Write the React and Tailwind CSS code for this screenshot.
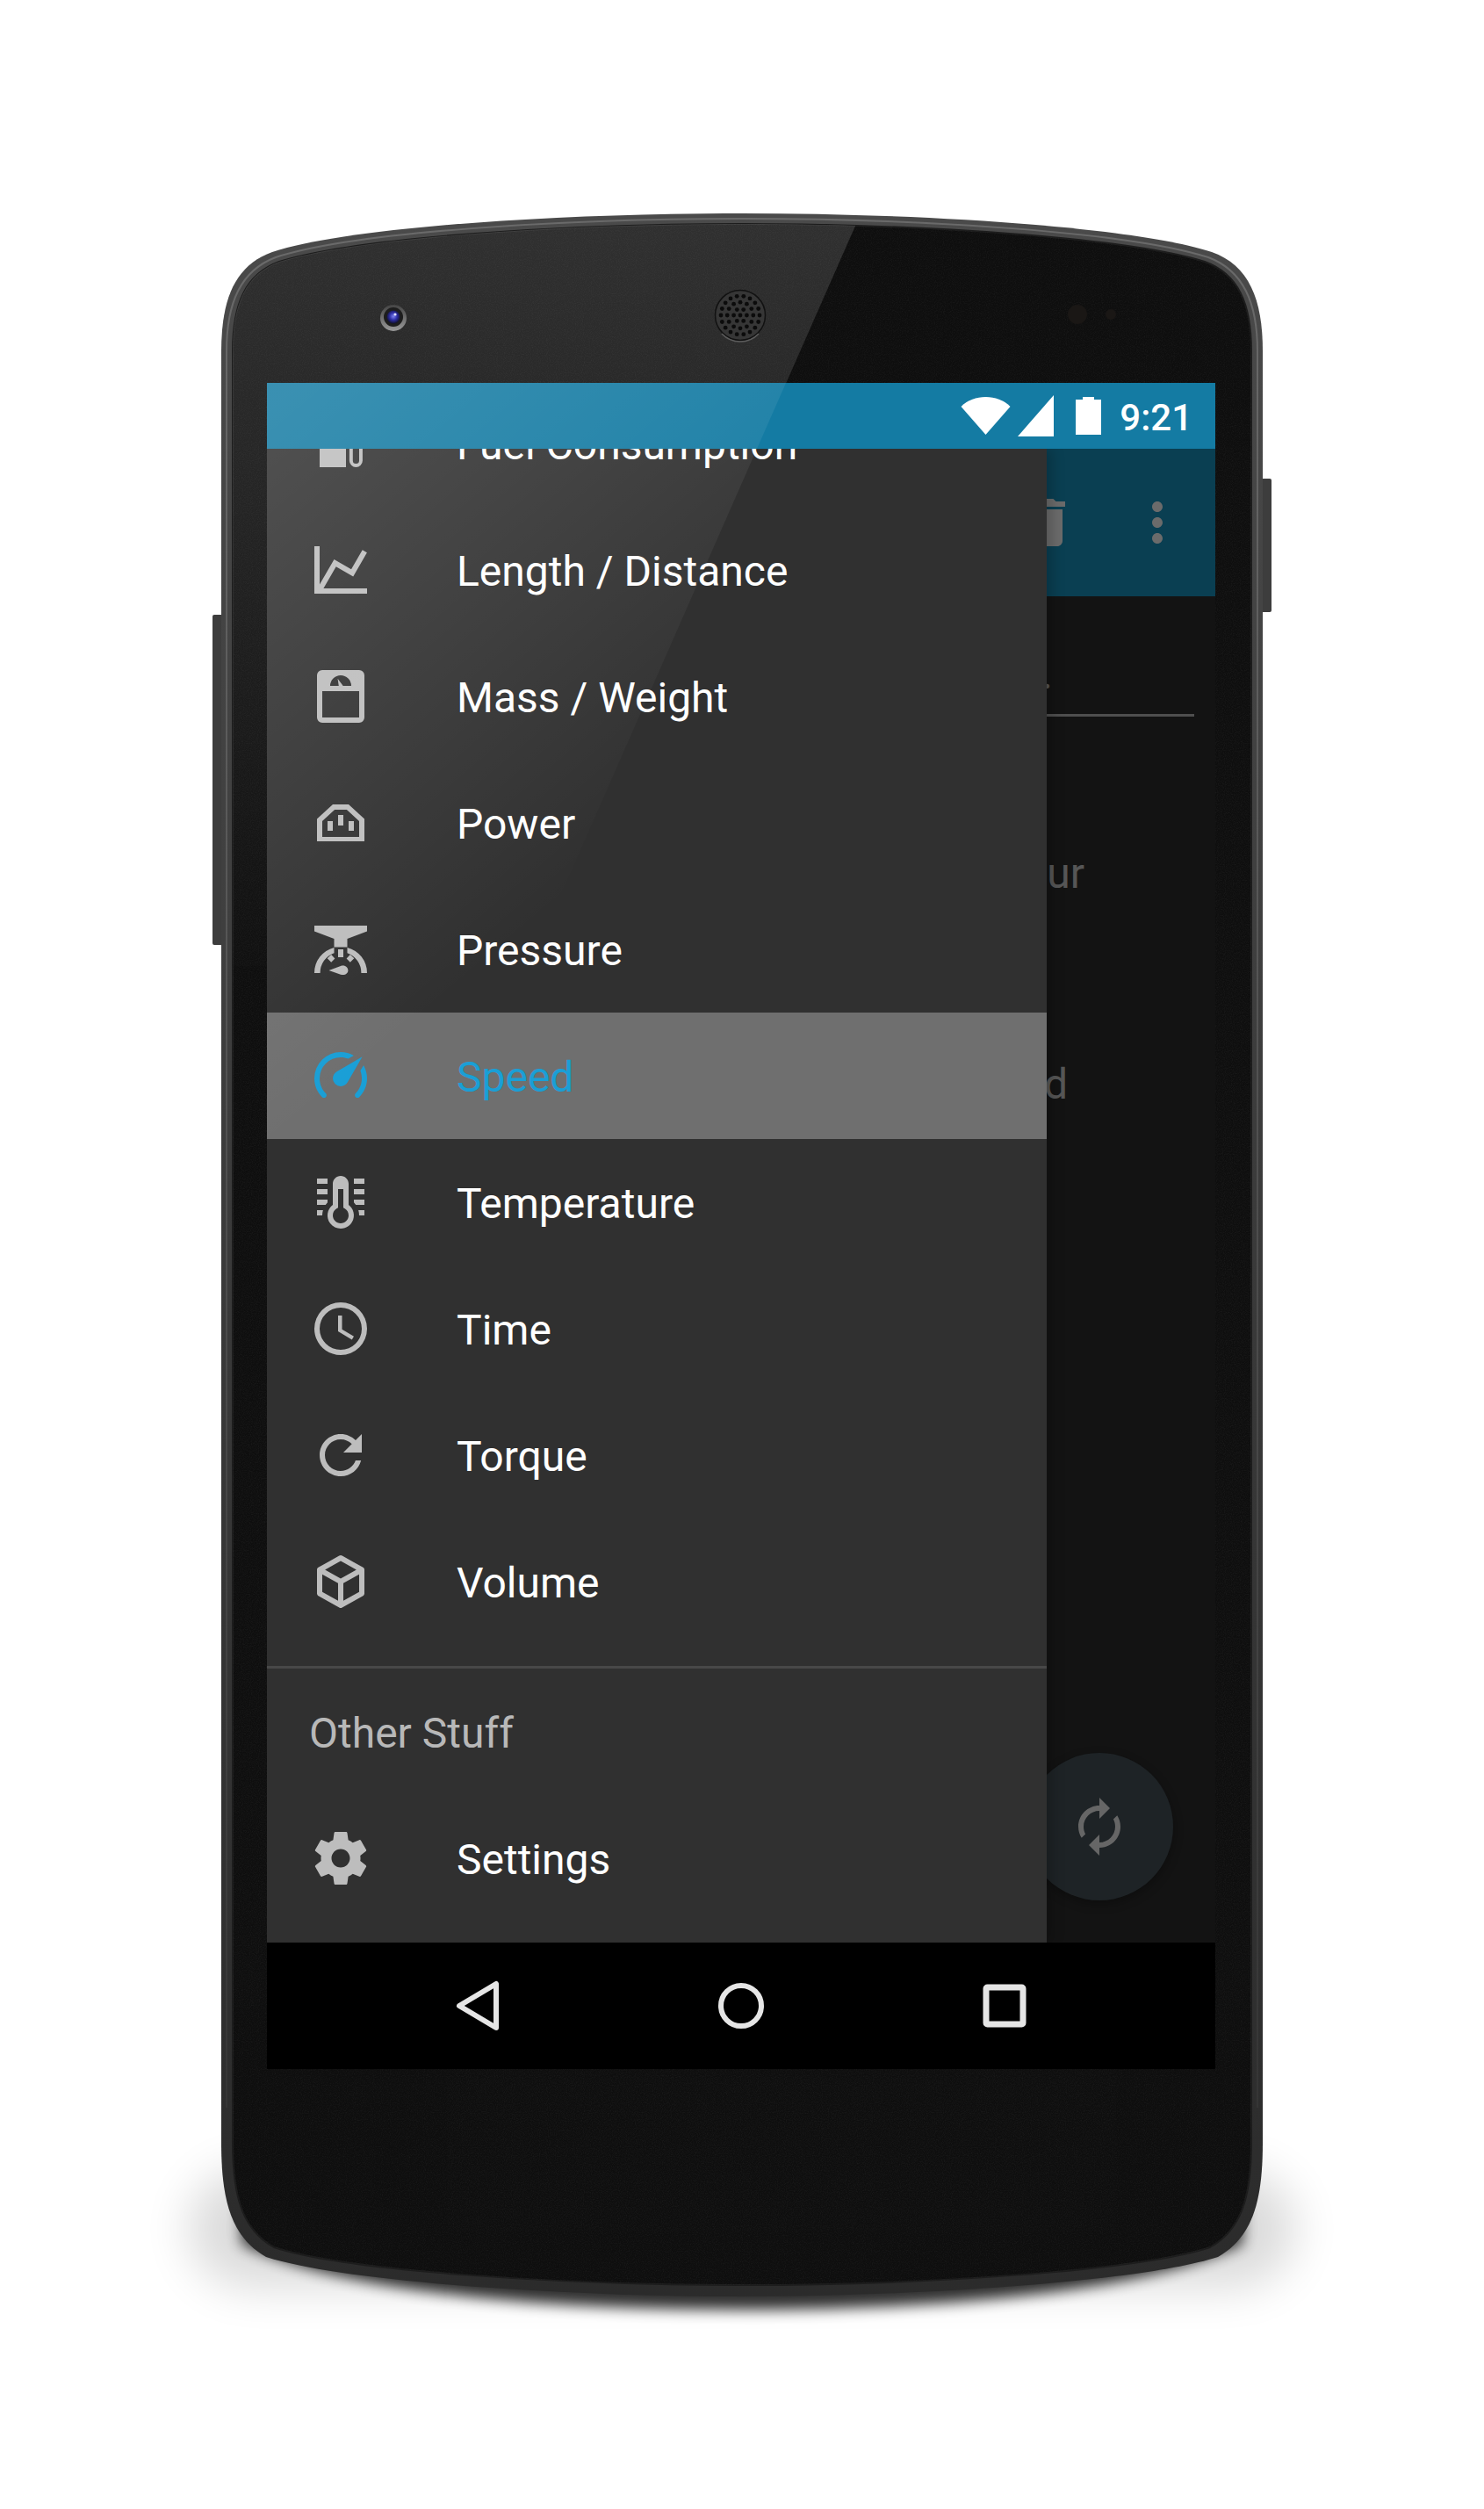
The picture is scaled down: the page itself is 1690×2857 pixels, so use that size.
const SOCKET =
  "M9 5H15L21 10.5V19H3V10.5ZM9.7 7L5 11.3V17.3H19V11.3L14.3 7ZM7 11.3H9V15H7ZM11 9H13V13H11ZM15 11.3H17V15H15Z";

const PRESSURE =
  "M2 3H22V5.2L14.5 8V11.2H9.5V8L2 5.2ZM2 21A10 10 0 0 1 9.5 11.3V13.4A8 8 0 0 0 4.2 21ZM22 21A10 10 0 0 0 14.5 11.3V13.4A8 8 0 0 1 19.8 21ZM6.9 15.4L8.4 14L9.8 15.5L8.4 16.9ZM17.1 15.4L15.6 14L14.2 15.5L15.6 16.9ZM11 12H13V15H11ZM7.5 20L12 18.3C13.7 17.8 14.8 18.9 14.8 20C14.8 21.1 13.7 22 12 21.6Z";

const THERMOMETER =
  "M17 3H21V5H17ZM17 7H21V9H17ZM17 11H21V13H17.75L17 12.1ZM21 15V17H19C19 16.31 18.9 15.63 18.71 15ZM7 3V5H3V3ZM7 7V9H3V7ZM7 11V12.1L6.25 13H3V11ZM3 15H5.29C5.1 15.63 5 16.31 5 17H3ZM15 13V5C15 3.34 13.66 2 12 2S9 3.34 9 5V13C6.79 14.66 6.34 17.79 8 20S12.79 22.66 15 21 17.66 16.21 16 14C15.72 13.62 15.38 13.28 15 13ZM12 20C10.34 20 9 18.66 9 17C9 15.91 9.59 14.9 10.54 14.37L11 14.1V7H13V14.1L13.46 14.37C14.41 14.9 15 15.91 15 17C15 18.66 13.66 20 12 20Z";

// drawer rows, the first one sits half under the status bar
const units = [
  { label: "Fuel Consumption", icon: "M4 3H14V21H4ZM15.3 3H16.6V18.5A1.2 1.2 0 0 0 19 18.5V3H20.3V18.5A2.5 2.5 0 0 1 15.3 18.5Z" },
  { label: "Length / Distance", icon: "M16,11.78L20.24,4.45L21.97,5.45L16.74,14.5L10.23,10.75L5.46,19H22V21H2V3H4V17.54L9.5,8L16,11.78Z" },
  { label: "Mass / Weight", icon: "M5,2H19A2,2 0 0,1 21,4V20A2,2 0 0,1 19,22H5A2,2 0 0,1 3,20V4A2,2 0 0,1 5,2M12,4A4,4 0 0,0 8,8H11.26L10.85,5.23L12.9,8H16A4,4 0 0,0 12,4M5,10V20H19V10H5Z" },
  { label: "Power", icon: SOCKET },
  { label: "Pressure", icon: PRESSURE },
  { label: "Speed", active: true, icon: "M12,16A3,3 0 0,1 9,13C9,11.88 9.61,10.9 10.5,10.39L20.21,4.77L14.68,14.35C14.18,15.33 13.17,16 12,16M12,3C13.81,3 15.5,3.5 16.97,4.32L14.87,5.53C14,5.19 13,5 12,5A8,8 0 0,0 4,13C4,15.21 4.89,17.21 6.34,18.65H6.35C6.74,19.04 6.74,19.67 6.35,20.06C5.96,20.45 5.32,20.45 4.93,20.07V20.07C3.12,18.26 2,15.76 2,13A10,10 0 0,1 12,3M22,13C22,15.76 20.88,18.26 19.07,20.07V20.07C18.68,20.45 18.05,20.45 17.66,20.06C17.27,19.67 17.27,19.04 17.66,18.65V18.65C19.11,17.2 20,15.21 20,13C20,12 19.81,11 19.46,10.1L20.67,8C21.5,9.5 22,11.18 22,13Z" },
  { label: "Temperature", icon: THERMOMETER },
  { label: "Time", icon: "M12,20A8,8 0 0,0 20,12A8,8 0 0,0 12,4A8,8 0 0,0 4,12A8,8 0 0,0 12,20M12,2A10,10 0 0,1 22,12A10,10 0 0,1 12,22C6.47,22 2,17.5 2,12A10,10 0 0,1 12,2M12.5,7V12.25L17,14.92L16.25,16.15L11,13V7H12.5Z" },
  { label: "Torque", icon: "M17.65 6.35C16.2 4.9 14.21 4 12 4c-4.42 0-7.99 3.58-7.99 8s3.57 8 7.99 8c3.73 0 6.84-2.55 7.73-6h-2.08c-.82 2.33-3.04 4-5.65 4-3.31 0-6-2.69-6-6s2.69-6 6-6c1.66 0 3.14.69 4.22 1.78L13 11h7V4l-2.35 2.35z" },
  { label: "Volume", icon: "M21,16.5C21,16.88 20.79,17.21 20.47,17.38L12.57,21.82C12.41,21.94 12.21,22 12,22C11.79,22 11.59,21.94 11.43,21.82L3.53,17.38C3.21,17.21 3,16.88 3,16.5V7.5C3,7.12 3.21,6.79 3.53,6.62L11.43,2.18C11.59,2.06 11.79,2 12,2C12.21,2 12.41,2.06 12.57,2.18L20.47,6.62C20.79,6.79 21,7.12 21,7.5V16.5M12,4.15L6.04,7.5L12,10.85L17.96,7.5L12,4.15M5,15.91L11,19.29V12.58L5,9.21V15.91M19,15.91V9.21L13,12.58V19.29L19,15.91Z" },
];

const SETTINGS =
  "M19.43 12.98c.04-.32.07-.64.07-.98s-.03-.66-.07-.98l2.11-1.65c.19-.15.24-.42.12-.64l-2-3.46c-.12-.22-.39-.3-.61-.22l-2.49 1c-.52-.4-1.08-.73-1.69-.98l-.38-2.65C14.46 2.18 14.25 2 14 2h-4c-.25 0-.46.18-.49.42l-.38 2.65c-.61.25-1.17.59-1.69.98l-2.49-1c-.23-.09-.49 0-.61.22l-2 3.46c-.13.22-.07.49.12.64l2.11 1.65c-.04.32-.07.65-.07.98s.03.66.07.98l-2.11 1.65c-.19.15-.24.42-.12.64l2 3.46c.12.22.39.3.61.22l2.49-1c.52.4 1.08.73 1.69.98l.38 2.65c.03.24.24.42.49.42h4c.25 0 .46-.18.49-.42l.38-2.65c.61-.25 1.17-.59 1.69-.98l2.49 1c.23.09.49 0 .61-.22l2-3.46c.12-.22.07-.49-.12-.64l-2.11-1.65zM12 15.5c-1.93 0-3.5-1.57-3.5-3.5s1.57-3.5 3.5-3.5 3.5 1.57 3.5 3.5-1.57 3.5-3.5 3.5z";

const OUTER =
  "M252 400C252 340 268 302 310 287C400 258 640 243 845 243C1050 243 1290 258 1380 287C1422 302 1438 340 1438 400L1438 2440C1438 2510 1425 2548 1387 2570C1300 2598 1050 2615 845 2615C640 2615 390 2598 303 2570C265 2548 252 2510 252 2440Z";
const INNER =
  "M265 400C265 345 280 312 318 298C408 270 645 255 845 255C1045 255 1282 270 1372 298C1410 312 1425 345 1425 400L1425 2440C1425 2505 1412 2540 1378 2559C1295 2586 1050 2602 845 2602C640 2602 395 2586 312 2559C278 2540 265 2505 265 2440Z";

// speaker holes sit on concentric rings
const speakerHoles = [{ x: 0, y: 0 }];
[[7.4, 6], [14.8, 12], [22, 18]].forEach(([radius, count]) => {
  for (let i = 0; i < count; i++) {
    const angle = (i / count) * Math.PI * 2;
    speakerHoles.push({ x: Math.cos(angle) * radius, y: Math.sin(angle) * radius });
  }
});

function Icon({ d, className }) {
  return (
    <svg viewBox="0 0 24 24" className={`w-[72px] h-[72px] shrink-0 fill-current ${className || ""}`}>
      <path d={d} fillRule="evenodd" />
    </svg>
  );
}

function DrawerRow({ label, icon, active }) {
  return (
    <div className={`flex h-[144px] items-center pl-[48px] ${active ? "bg-[#6f6f6f] text-[#1a9fd6]" : "text-white"}`}>
      <Icon d={icon} className={active ? "" : "text-[#bdbdbd]"} />
      <span className="ml-[96px] pt-[3px] text-[48px]">{label}</span>
    </div>
  );
}

function PhoneBody() {
  return (
    <svg viewBox="0 0 1690 2857" className="absolute inset-0 h-full w-full">
      <defs>
        <linearGradient id="rim" x1="0" y1="243" x2="0" y2="2615" gradientUnits="userSpaceOnUse">
          <stop offset="0" stopColor="#4a4a4a" />
          <stop offset="0.5" stopColor="#3a3a3a" />
          <stop offset="1" stopColor="#2b2b2b" />
        </linearGradient>
        <linearGradient id="rimLine" x1="0" y1="300" x2="0" y2="2500" gradientUnits="userSpaceOnUse">
          <stop offset="0" stopColor="#6a6a6a" />
          <stop offset="0.5" stopColor="#4e4e4e" />
          <stop offset="1" stopColor="#333333" />
        </linearGradient>
        <linearGradient id="bezelGlare" x1="0" y1="255" x2="0" y2="1150" gradientUnits="userSpaceOnUse">
          <stop offset="0" stopColor="#fff" stopOpacity="0.14" />
          <stop offset="0.3" stopColor="#fff" stopOpacity="0.1" />
          <stop offset="1" stopColor="#fff" stopOpacity="0" />
        </linearGradient>
        <radialGradient id="lens" cx="0.5" cy="0.45" r="0.55">
          <stop offset="0" stopColor="#7d82f0" />
          <stop offset="0.5" stopColor="#2f2fa8" />
          <stop offset="1" stopColor="#10102c" />
        </radialGradient>
        <linearGradient id="lensRing" x1="0" y1="0" x2="0" y2="1">
          <stop offset="0" stopColor="#444444" />
          <stop offset="1" stopColor="#9a9a9a" />
        </linearGradient>
        <filter id="blurNear" x="-20%" y="-50%" width="140%" height="200%">
          <feGaussianBlur stdDeviation="8" />
        </filter>
        <filter id="blurFar" x="-20%" y="-50%" width="140%" height="200%">
          <feGaussianBlur stdDeviation="26" />
        </filter>
        <filter id="grain">
          <feTurbulence type="fractalNoise" baseFrequency="0.9" numOctaves="2" />
          <feColorMatrix values="0 0 0 0 1  0 0 0 0 1  0 0 0 0 1  0 0 0 0.5 -0.18" />
        </filter>
        <clipPath id="innerClip">
          <path d={INNER} />
        </clipPath>
      </defs>

      {/* ground shadow */}
      <rect x="215" y="2470" width="1260" height="135" rx="70" fill="#000" opacity="0.14" filter="url(#blurFar)" />
      <path d="M275 2555C390 2612 640 2630 845 2630C1050 2630 1300 2612 1415 2555L1415 2500L275 2500Z" fill="#000" opacity="0.8" filter="url(#blurNear)" />

      {/* side buttons */}
      <rect x="242" y="700" width="14" height="376" rx="2" fill="#3d3d3d" />
      <rect x="1434" y="545" width="14" height="152" rx="2" fill="#3d3d3d" />

      <path d={OUTER} fill="url(#rim)" />
      <path d="M258 2400V400C258 345 274 308 314 293C404 264 642 249 845 249C1048 249 1286 264 1376 293C1416 308 1432 345 1432 400V2400" fill="none" stroke="url(#rimLine)" strokeWidth="2" />
      <path d={INNER} fill="#0e0e0e" stroke="#1c1c1c" strokeWidth="2" />
      <rect x="252" y="243" width="1186" height="2372" filter="url(#grain)" opacity="0.18" clipPath="url(#innerClip)" />
      <polygon points="265,255 975,255 603,1100 265,1100" fill="url(#bezelGlare)" clipPath="url(#innerClip)" />

      {/* front camera */}
      <circle cx="448" cy="362" r="15" fill="url(#lensRing)" />
      <circle cx="448" cy="361" r="11" fill="#1d1d1d" />
      <circle cx="448" cy="361" r="7.5" fill="url(#lens)" />
      <circle cx="450" cy="358" r="1.6" fill="#dfe0ff" />

      {/* earpiece */}
      <circle cx="843" cy="359" r="28.5" fill="#363636" stroke="#111111" strokeWidth="1.5" />
      <path d="M822 380A29 29 0 0 0 864 380" fill="none" stroke="#5c5c5c" strokeWidth="1.5" />
      {speakerHoles.map((hole, i) => (
        <circle key={i} cx={843 + hole.x} cy={359 + hole.y} r="2.4" fill="#0b0b0b" />
      ))}

      {/* sensors */}
      <circle cx="1227" cy="358" r="11" fill="#1a1715" />
      <circle cx="1265" cy="358" r="6" fill="#1a1715" />
    </svg>
  );
}

function StatusBar() {
  return (
    <div className="flex h-[75px] shrink-0 items-center justify-end bg-[#147ba3] pr-[26px] text-white">
      <svg viewBox="0 0 57 43" className="h-[43px] w-[57px] fill-current">
        <path d="M0.5 11C8 3.5 18 0 28.5 0C39 0 49 3.5 56.5 11L28.5 43Z" />
      </svg>
      <svg viewBox="0 0 41 47" className="ml-[8px] h-[47px] w-[41px] fill-current">
        <path d="M41 0V47H0Z" />
      </svg>
      <svg viewBox="0 0 29 43" className="ml-[25px] h-[43px] w-[29px] fill-current">
        <path d="M8 0H21V3H29V43H0V3H8Z" />
      </svg>
      <span className="ml-[21px] pt-[4px] text-[42px] font-medium leading-none">9:21</span>
    </div>
  );
}

function Toolbar() {
  return (
    <div className="flex h-[168px] items-center justify-end gap-[54px] bg-[#0a3f52] pr-[30px] text-[#6b6b6b]">
      <Icon d="M6 19c0 1.1.9 2 2 2h8c1.1 0 2-.9 2-2V7H6v12zM19 4h-3.5l-1-1h-5l-1 1H5v2h14V4z" />
      <Icon d="M12 8c1.1 0 2-.9 2-2s-.9-2-2-2-2 .9-2 2 .9 2 2 2zm0 2c-1.1 0-2 .9-2 2s.9 2 2 2 2-.9 2-2-.9-2-2-2zm0 6c-1.1 0-2 .9-2 2s.9 2 2 2 2-.9 2-2-.9-2-2-2z" />
    </div>
  );
}

// the dimmed page behind the drawer, only its right edge shows
function Content() {
  return (
    <div className="text-right text-[48px] leading-[56px] text-[#565656]">
      <p className="mt-[61px] pr-[185px]">1.</p>
      <div className="ml-[48px] mr-[24px] mt-[17px] h-[3px] bg-[#4f4f4f]" />
      <p className="mt-[151px] pr-[149px]">Kilometer per hour</p>
      <p className="mt-[184px] pr-[168px]">Meter per second</p>
    </div>
  );
}

function Drawer() {
  return (
    <div className="absolute bottom-0 left-0 top-0 w-[888px] overflow-hidden bg-[#303030] shadow-[6px_0_14px_rgba(0,0,0,0.2)]">
      <div className="-mt-[78px]">
        {units.map((unit) => (
          <DrawerRow key={unit.label} {...unit} />
        ))}
        <div className="mt-[24px] h-[3px] bg-[#484848]" />
        <div className="flex h-[144px] items-center pl-[48px] pt-[3px] text-[48px] text-[#b8b8b8]">Other Stuff</div>
        <DrawerRow label="Settings" icon={SETTINGS} />
      </div>
    </div>
  );
}

function NavBar() {
  return (
    <div className="flex h-[144px] shrink-0 items-center justify-center gap-[228px] bg-black">
      <svg viewBox="0 0 72 72" className="h-[72px] w-[72px] fill-none stroke-[#e6e6e6]">
        <path d="M57 11V61L15 36Z" strokeWidth="6" strokeLinejoin="round" />
      </svg>
      <svg viewBox="0 0 72 72" className="h-[72px] w-[72px] fill-none stroke-[#e6e6e6]">
        <circle cx="36" cy="36" r="23" strokeWidth="6" />
      </svg>
      <svg viewBox="0 0 72 72" className="h-[72px] w-[72px] fill-none stroke-[#e6e6e6]">
        <rect x="15" y="15" width="42" height="42" rx="1.5" strokeWidth="7" />
      </svg>
    </div>
  );
}

export default function App() {
  return (
    <div className="relative h-[2857px] w-[1690px] overflow-hidden bg-white pl-[304px] pt-[436px] font-[Roboto,sans-serif]">
      <PhoneBody />

      <div className="relative flex h-[1920px] w-[1080px] flex-col bg-[#131313]">
        <StatusBar />
        <div className="relative flex-1 overflow-hidden">
          <Toolbar />
          <Content />
          {/* sync action button */}
          <div className="absolute bottom-[48px] right-[48px] flex h-[168px] w-[168px] items-center justify-center rounded-full bg-[#1e2326] text-[#666666] shadow-[0_4px_12px_rgba(0,0,0,0.3)]">
            <Icon
              d="M12 4V1L8 5l4 4V6c3.31 0 6 2.69 6 6 0 1.01-.25 1.97-.7 2.8l1.46 1.46C19.54 15.03 20 13.57 20 12c0-4.42-3.58-8-8-8zm0 14c-3.31 0-6-2.69-6-6 0-1.01.25-1.97.7-2.8L5.24 7.74C4.46 8.97 4 10.43 4 12c0 4.42 3.58 8 8 8v3l4-4-4-4v3z"
              className="-scale-x-100"
            />
          </div>
          <Drawer />
        </div>
        <NavBar />
      </div>

      {/* glass reflection over the screen */}
      <svg viewBox="0 0 1690 2857" className="pointer-events-none absolute inset-0 h-full w-full">
        <defs>
          <linearGradient id="screenGlare" x1="304" y1="470" x2="720" y2="960" gradientUnits="userSpaceOnUse">
            <stop offset="0" stopColor="#fff" stopOpacity="0.16" />
            <stop offset="1" stopColor="#fff" stopOpacity="0" />
          </linearGradient>
        </defs>
        <polygon points="304,436 895,436 304,1779" fill="url(#screenGlare)" />
      </svg>
    </div>
  );
}
